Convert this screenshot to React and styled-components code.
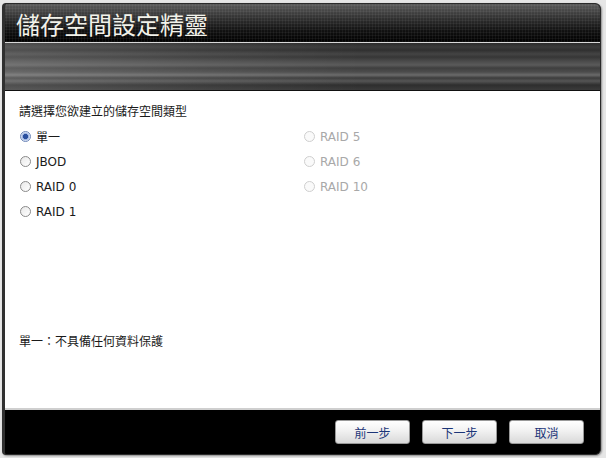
import React, { useState } from 'react';
import styled, { createGlobalStyle } from 'styled-components';

const GlobalStyle = createGlobalStyle`
  html, body {
    margin: 0;
    padding: 0;
    background: #e6e6e6;
  }
  body {
    font-family: "DejaVu Sans", "Noto Sans CJK TC", sans-serif;
  }
`;

const Page = styled.div`
  width: 606px;
  height: 458px;
  padding: 3px 5px 3px 2px;
  box-sizing: border-box;
  overflow: hidden;
`;

const Dialog = styled.div`
  width: 599px;
  height: 452px;
  display: flex;
  flex-direction: column;
  background: #000;
  border: 1px solid #2a2a2a;
  border-left: 3px solid #303030;
  border-radius: 4px 6px 6px 4px;
  box-sizing: border-box;
  overflow: hidden;
  box-shadow: 1px 1px 2px rgba(0, 0, 0, 0.4);
`;

const TitleBar = styled.div`
  height: 38px;
  flex: none;
  display: flex;
  align-items: center;
  padding-left: 11px;
  background:
    radial-gradient(circle, rgba(255, 255, 255, 0.09) 0.8px, transparent 1.2px) 0 0 / 3px 3px,
    linear-gradient(to bottom, #5a5a5a 0%, #333 35%, #111 70%, #000 100%);
  border-bottom: 1px solid #d8d8d8;
`;

const Title = styled.h1`
  margin: 0;
  font-family: "Noto Sans CJK TC", sans-serif;
  font-weight: 400;
  font-size: 24px;
  color: #f2f2ea;
  line-height: 1;
  padding-top: 2px;
`;

const MetalBand = styled.div`
  height: 47px;
  flex: none;
  border-bottom: 1px solid #111;
  background:
    linear-gradient(to right, rgba(255, 255, 255, 0.16) 0%, rgba(255, 255, 255, 0.06) 35%, transparent 60%),
    linear-gradient(to bottom,
      #2b2b2b 0px, #3a3a3a 4px, #2f2f2f 7px, #444 11px, #363636 14px,
      #4a4a4a 18px, #5a5a5a 22px, #3f3f3f 25px, #4c4c4c 29px, #6a6a6a 32px,
      #3c3c3c 35px, #555 38px, #2e2e2e 42px, #3a3a3a 47px);
`;

const Content = styled.div`
  flex: 1;
  background: #fff;
  border-bottom: 2px solid #cfcfcf;
  padding: 13px 14px 0 14px;
  display: flex;
  flex-direction: column;
  font-size: 12px;
  color: #1a1a1a;
`;

const Prompt = styled.div`
  font-family: "Noto Sans CJK TC", sans-serif;
  font-size: 12px;
  line-height: 14px;
  margin-bottom: 6px;
`;

const OptionGrid = styled.div`
  display: grid;
  grid-template-columns: 284px 1fr;
  grid-auto-flow: column;
  grid-template-rows: repeat(4, 25px);
`;

const Option = styled.label`
  display: flex;
  align-items: center;
  gap: 5px;
  height: 25px;
  color: ${p => (p.disabled ? '#a8a8a8' : '#1a1a1a')};
  cursor: ${p => (p.disabled ? 'default' : 'pointer')};
  font-family: "DejaVu Sans", "Noto Sans CJK TC", sans-serif;
  font-size: 12px;
`;

const Radio = styled.span`
  width: 11px;
  height: 11px;
  border-radius: 50%;
  box-sizing: border-box;
  border: 1px solid ${p => (p.disabled ? '#cfcfcf' : p.checked ? '#6d86b8' : '#8a8a8a')};
  background: ${p => (p.checked
    ? 'radial-gradient(circle, #2a4f9e 0 2.3px, #8fa9dc 2.8px, #e4ebf8 4.5px)'
    : p.disabled ? '#fafafa' : 'linear-gradient(135deg, #e8e8e8, #fff)')};
  flex: none;
  margin-left: 1px;
`;

const Description = styled.div`
  margin-top: auto;
  margin-bottom: 60px;
  font-family: "Noto Sans CJK TC", sans-serif;
  font-size: 12px;
  line-height: 14px;
`;

const Footer = styled.div`
  height: 44px;
  flex: none;
  background: #000;
  display: flex;
  justify-content: flex-end;
  align-items: flex-start;
  gap: 12px;
  padding: 10px 16px 0 0;
  box-sizing: border-box;
`;

const Button = styled.button`
  width: 75px;
  height: 24px;
  border: 1px solid #999;
  border-radius: 3px;
  background: linear-gradient(to bottom, #ffffff 0%, #f1f1f1 45%, #d9d9d9 100%);
  color: #1c3578;
  font-family: "Noto Sans CJK TC", sans-serif;
  font-size: 12px;
  padding: 0;
  cursor: pointer;
`;

const options = [
  { id: 'single', label: '單一' },
  { id: 'jbod', label: 'JBOD' },
  { id: 'raid0', label: 'RAID 0' },
  { id: 'raid1', label: 'RAID 1' },
  { id: 'raid5', label: 'RAID 5', disabled: true },
  { id: 'raid6', label: 'RAID 6', disabled: true },
  { id: 'raid10', label: 'RAID 10', disabled: true },
];

const descriptions = {
  single: '單一：不具備任何資料保護',
  jbod: 'JBOD：不具備任何資料保護',
  raid0: 'RAID 0：不具備任何資料保護',
  raid1: 'RAID 1：磁碟鏡像資料保護',
};

const App = () => {
  const [selected, setSelected] = useState('single');

  return (
    <>
      <GlobalStyle />
      <Page>
        <Dialog>
          <TitleBar>
            <Title>儲存空間設定精靈</Title>
          </TitleBar>
          <MetalBand />
          <Content>
            <Prompt>請選擇您欲建立的儲存空間類型</Prompt>
            <OptionGrid>
              {options.map(opt => (
                <Option
                  key={opt.id}
                  disabled={opt.disabled}
                  onClick={() => !opt.disabled && setSelected(opt.id)}
                >
                  <Radio checked={selected === opt.id} disabled={opt.disabled} />
                  {opt.label}
                </Option>
              ))}
            </OptionGrid>
            <Description>{descriptions[selected]}</Description>
          </Content>
          <Footer>
            <Button>前一步</Button>
            <Button>下一步</Button>
            <Button>取消</Button>
          </Footer>
        </Dialog>
      </Page>
    </>
  );
};

export default App;
